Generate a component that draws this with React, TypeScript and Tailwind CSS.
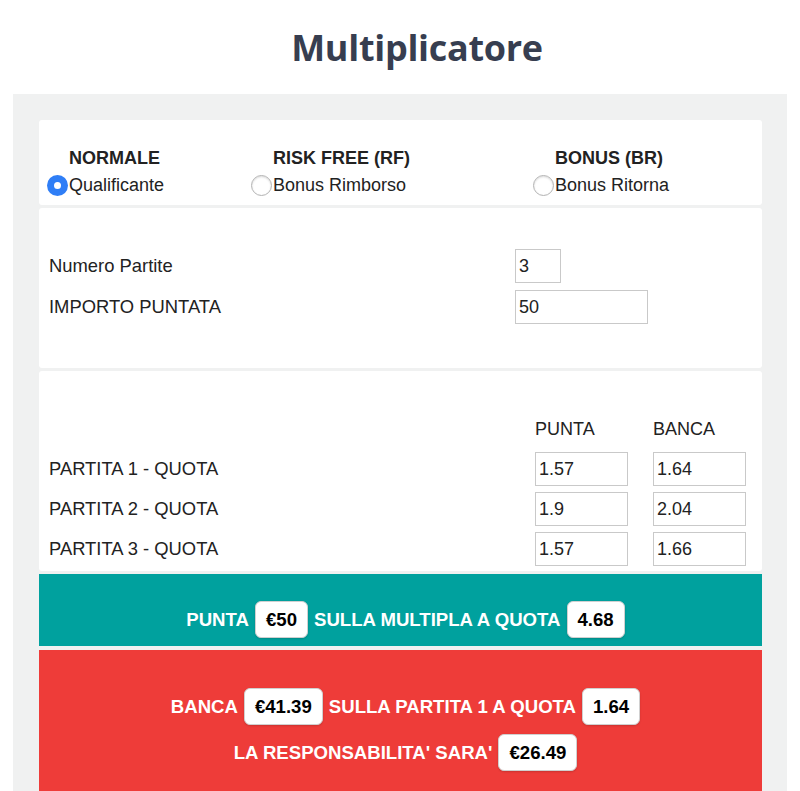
import { useState } from "react";

const modes = [
  { title: "NORMALE", label: "Qualificante" },
  { title: "RISK FREE (RF)", label: "Bonus Rimborso" },
  { title: "BONUS (BR)", label: "Bonus Ritorna" },
];

const partite = [
  { name: "PARTITA 1 - QUOTA", punta: "1.57", banca: "1.64" },
  { name: "PARTITA 2 - QUOTA", punta: "1.9", banca: "2.04" },
  { name: "PARTITA 3 - QUOTA", punta: "1.57", banca: "1.66" },
];

function Radio({ checked }: { checked: boolean }) {
  return checked ? (
    <span className="w-[21px] h-[21px] rounded-full bg-[#2f7ef6] flex items-center justify-center shrink-0">
      <span className="w-[7px] h-[7px] rounded-full bg-white" />
    </span>
  ) : (
    <span className="w-[21px] h-[21px] rounded-full bg-white border border-[#b3b3b3] shadow-[inset_0_1px_2px_rgba(0,0,0,0.15)] shrink-0" />
  );
}

function Pill({ children }: { children: React.ReactNode }) {
  return (
    <span className="inline-block bg-white text-black border border-[#d0d0d0] rounded-[6px] px-[10px] py-[7px] leading-[21px] shadow-[0_1px_2px_rgba(0,0,0,0.15)]">
      {children}
    </span>
  );
}

function Field({ value, width }: { value: string; width: string }) {
  return (
    <div className={`${width} h-[34px] border border-[#c9c9c9] bg-white px-[3px] flex items-center text-[18px] text-[#222]`}>
      {value}
    </div>
  );
}

export default function App() {
  const [mode, setMode] = useState(0);

  return (
    <div className="min-h-screen bg-white font-['Liberation_Sans',Arial,sans-serif]">
      <div className="h-[94px] pl-[34px] pt-[2px] flex items-center justify-center">
        <h1 className="font-['Open_Sans',sans-serif] font-bold text-[36px] text-[#373e50] tracking-[-0.3px]">
          Multiplicatore
        </h1>
      </div>

      <div className="mx-[13px] bg-[#f0f1f1] pt-[26px] pl-[26px] pr-[25px]">
        <div className="flex flex-col gap-[3px]">
          {/* tipo */}
          <div className="bg-white rounded-[3px] h-[85px] pt-[27px] pl-[30px] grid grid-cols-[204px_282px_1fr]">
            {modes.map((m, i) => (
              <div key={m.title} className="flex flex-col">
                <div className="font-bold text-[18px] leading-[22px] text-[#222]">{m.title}</div>
                <div
                  className="-ml-[22px] mt-[5px] flex items-center gap-[1px] cursor-pointer"
                  onClick={() => setMode(i)}
                >
                  <Radio checked={mode === i} />
                  <span className="text-[18px] leading-[22px] text-[#222]">{m.label}</span>
                </div>
              </div>
            ))}
          </div>

          {/* importi */}
          <div className="bg-white rounded-[3px] h-[160px] pt-[41px] pl-[10px] flex flex-col gap-[7px]">
            <div className="grid grid-cols-[466px_1fr] items-center">
              <span className="text-[18.4px] text-[#222]">Numero Partite</span>
              <Field value="3" width="w-[46px]" />
            </div>
            <div className="grid grid-cols-[466px_1fr] items-center">
              <span className="text-[18.4px] text-[#222]">IMPORTO PUNTATA</span>
              <Field value="50" width="w-[133px]" />
            </div>
          </div>

          {/* quote */}
          <div className="bg-white rounded-[3px] h-[200px] pt-[47px] pl-[10px]">
            <div className="grid grid-cols-[461px_93px_93px] gap-x-[25px] items-center">
              <span />
              <span className="text-[18px] leading-[22px] text-[#222]">PUNTA</span>
              <span className="text-[18px] leading-[22px] text-[#222]">BANCA</span>
            </div>
            <div className="mt-[12px] flex flex-col gap-[6px]">
              {partite.map((p) => (
                <div key={p.name} className="grid grid-cols-[461px_93px_93px] gap-x-[25px] items-center">
                  <span className="text-[18.4px] text-[#222]">{p.name}</span>
                  <Field value={p.punta} width="w-[93px]" />
                  <Field value={p.banca} width="w-[93px]" />
                </div>
              ))}
            </div>
          </div>

          {/* punta */}
          <div className="bg-[#00a19e] pt-[27px] pb-[8px] pl-[10px] flex items-center justify-center gap-[6px] text-white font-bold text-[18.6px]">
            <span>PUNTA</span>
            <Pill>€50</Pill>
            <span>SULLA MULTIPLA A QUOTA</span>
            <Pill>4.68</Pill>
          </div>

          {/* banca */}
          <div className="bg-[#ee3c39] mt-[1px] pt-[38px] pb-[30px] pl-[10px] flex flex-col items-center gap-[9px] text-white font-bold text-[18.6px]">
            <div className="flex items-center gap-[6px]">
              <span>BANCA</span>
              <Pill>€41.39</Pill>
              <span>SULLA PARTITA 1 A QUOTA</span>
              <Pill>1.64</Pill>
            </div>
            <div className="flex items-center gap-[6px]">
              <span>LA RESPONSABILITA' SARA'</span>
              <Pill>€26.49</Pill>
            </div>
          </div>
        </div>
      </div>
    </div>
  );
}
